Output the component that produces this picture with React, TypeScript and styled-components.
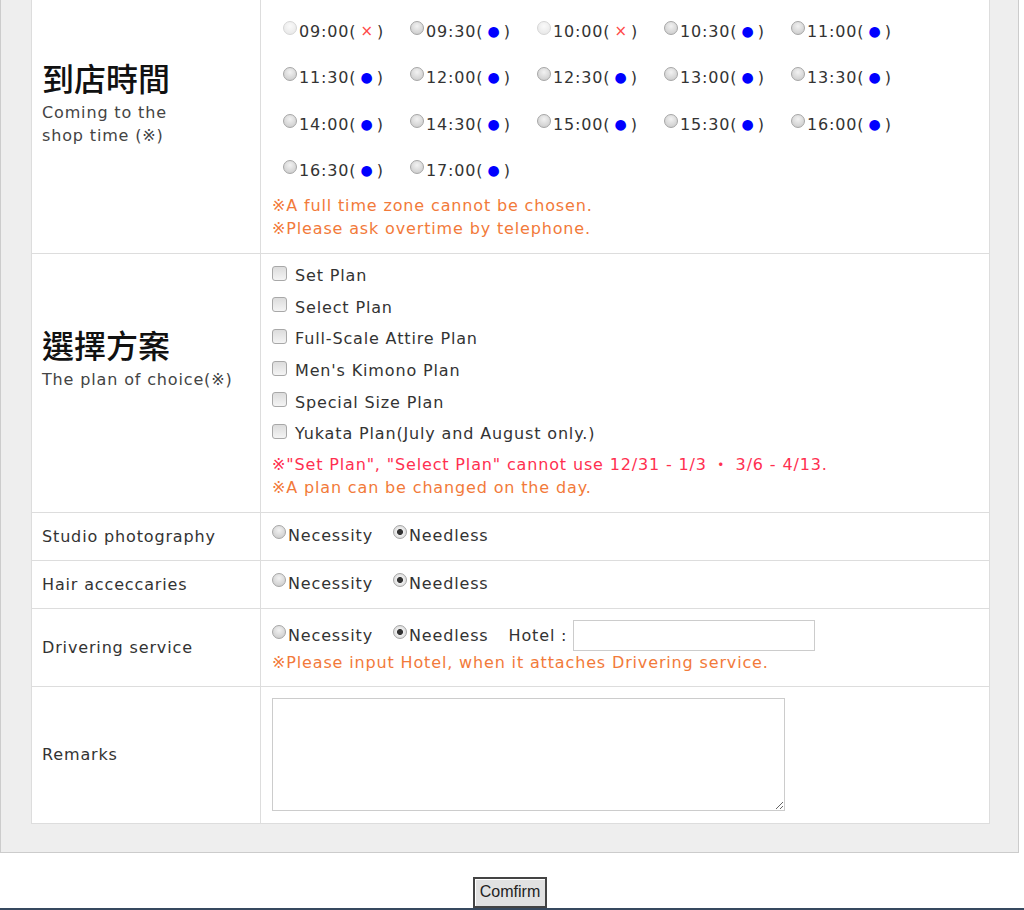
import styled, { createGlobalStyle } from "styled-components";

const GlobalStyle = createGlobalStyle`
  html, body {
    margin: 0;
    padding: 0;
    background: #fff;
  }
  body {
    font-family: "DejaVu Sans", "Noto Sans CJK TC", sans-serif;
    font-size: 16px;
    letter-spacing: 0.85px;
    color: #333;
  }
`;

const Page = styled.div`
  width: 1024px;
  height: 910px;
  display: flex;
  flex-direction: column;
  overflow: hidden;
`;

const Panel = styled.div`
  width: 1019px;
  box-sizing: border-box;
  background: #eee;
  border: 1px solid #ccc;
  border-top: none;
  padding: 0 28px 28px 30px;
`;

const Table = styled.div`
  background: #fff;
  border-left: 1px solid #ddd;
  border-right: 1px solid #ddd;
`;

const Row = styled.div`
  display: grid;
  grid-template-columns: 229px 1fr;
  border-bottom: 1px solid #ddd;
`;

const LabelCell = styled.div<{ $heading?: boolean }>`
  box-sizing: border-box;
  border-right: 1px solid #ddd;
  padding: 0 10px ${(p) => (p.$heading ? "50px" : "0")};
  display: flex;
  flex-direction: column;
  justify-content: center;
  line-height: 23px;
`;

const Heading = styled.div`
  font-family: "Noto Sans CJK TC", sans-serif;
  font-size: 32px;
  font-weight: 500;
  line-height: 40px;
  letter-spacing: 0;
  color: #111;
  margin-bottom: 4px;
`;

const Sub = styled.div`
  color: #444;
  line-height: 23px;
`;

const ValueCell = styled.div<{ $pad?: string }>`
  padding: ${(p) => p.$pad ?? "11px 11px 13px"};
  line-height: 23px;
`;

const TimeGrid = styled.div`
  display: grid;
  grid-template-columns: repeat(5, 127px);
  grid-auto-rows: 46.5px;
  align-items: center;
  padding-left: 11px;
`;

const Choice = styled.label`
  display: inline-flex;
  align-items: center;
  white-space: nowrap;
`;

const Radio = styled.input.attrs({ type: "radio" })`
  appearance: none;
  width: 14px;
  height: 14px;
  margin: 0 2px 7px 0;
  flex: none;
  box-sizing: border-box;
  border-radius: 50%;
  border: 1px solid #a6a6a6;
  background: radial-gradient(circle at 50% 35%, #f2f2f2, #c6c6c6);
  &:checked {
    background: radial-gradient(circle, #333 0 2.6px, #eeeeee 3.4px, #cfcfcf 100%);
  }
  &:disabled {
    border-color: #d6d6d6;
    background: radial-gradient(circle at 50% 35%, #fafafa, #e4e4e4);
  }
`;

const Mark = styled.span<{ $full?: boolean }>`
  display: inline-block;
  margin: 0 4px;
  font-size: ${(p) => (p.$full ? "15px" : "14px")};
  color: ${(p) => (p.$full ? "#ff4a4a" : "#0000ff")};
  letter-spacing: 0;
`;

const Note = styled.div<{ $alert?: boolean }>`
  color: ${(p) => (p.$alert ? "#ff3050" : "#f27a3a")};
  line-height: 23px;
`;

const PlanList = styled.div`
  display: flex;
  flex-direction: column;
  margin-bottom: 3px;
`;

const PlanItem = styled.label`
  display: flex;
  align-items: center;
  height: 31.6px;
`;

const Check = styled.input.attrs({ type: "checkbox" })`
  appearance: none;
  width: 15px;
  height: 15px;
  margin: 0 8px 5px 0;
  flex: none;
  box-sizing: border-box;
  border: 1px solid #a8a8a8;
  border-radius: 3px;
  background: linear-gradient(#dcdcdc, #f4f4f4);
`;

const OptionLine = styled.div`
  display: flex;
  align-items: center;
  gap: 20px;
  min-height: 23px;
`;

const HotelInput = styled.input`
  width: 242px;
  height: 31px;
  box-sizing: border-box;
  border: 1px solid #ccc;
  margin-left: -14px;
  padding: 0 4px;
`;

const Remarks = styled.textarea`
  display: block;
  width: 513px;
  height: 113px;
  box-sizing: border-box;
  border: 1px solid #ccc;
  resize: both;
`;

const ButtonBar = styled.div`
  height: 55px;
  box-sizing: border-box;
  padding-top: 24px;
  display: flex;
  justify-content: center;
`;

const Confirm = styled.button`
  width: 74px;
  height: 31px;
  font-family: "Liberation Sans", Arial, sans-serif;
  font-size: 16px;
  letter-spacing: 0;
  color: #222;
  background: #e1e1e1;
  border: 2px solid #444;
  box-shadow: inset 1px 1px 0 #fff;
  padding: 0;
  margin-left: -4px;
`;

const Taskbar = styled.div`
  height: 2px;
  background: #36495f;
`;

type Slot = { time: string; full?: boolean };

const slots: Slot[] = [
  { time: "09:00", full: true },
  { time: "09:30" },
  { time: "10:00", full: true },
  { time: "10:30" },
  { time: "11:00" },
  { time: "11:30" },
  { time: "12:00" },
  { time: "12:30" },
  { time: "13:00" },
  { time: "13:30" },
  { time: "14:00" },
  { time: "14:30" },
  { time: "15:00" },
  { time: "15:30" },
  { time: "16:00" },
  { time: "16:30" },
  { time: "17:00" },
];

const plans = [
  "Set Plan",
  "Select Plan",
  "Full-Scale Attire Plan",
  "Men's Kimono Plan",
  "Special Size Plan",
  "Yukata Plan(July and August only.)",
];

function NeedChoice({ name }: { name: string }) {
  return (
    <>
      <Choice>
        <Radio name={name} />
        Necessity
      </Choice>
      <Choice>
        <Radio name={name} defaultChecked />
        Needless
      </Choice>
    </>
  );
}

export default function App() {
  return (
    <Page>
      <GlobalStyle />
      <Panel>
        <Table>
          <Row>
            <LabelCell $heading>
              <Heading>到店時間</Heading>
              <Sub>Coming to the</Sub>
              <Sub>shop time (※)</Sub>
            </LabelCell>
            <ValueCell $pad="8px 11px 13px">
              <TimeGrid>
                {slots.map((s) => (
                  <Choice key={s.time}>
                    <Radio name="time" disabled={s.full} />
                    {s.time}(<Mark $full={s.full}>{s.full ? "×" : "●"}</Mark>)
                  </Choice>
                ))}
              </TimeGrid>
              <Note>※A full time zone cannot be chosen.</Note>
              <Note>※Please ask overtime by telephone.</Note>
            </ValueCell>
          </Row>

          <Row>
            <LabelCell $heading>
              <Heading>選擇方案</Heading>
              <Sub>The plan of choice(※)</Sub>
            </LabelCell>
            <ValueCell $pad="6px 11px 13px">
              <PlanList>
                {plans.map((p) => (
                  <PlanItem key={p}>
                    <Check />
                    {p}
                  </PlanItem>
                ))}
              </PlanList>
              <Note $alert>
                ※"Set Plan", "Select Plan" cannot use 12/31 - 1/3 ・ 3/6 - 4/13.
              </Note>
              <Note>※A plan can be changed on the day.</Note>
            </ValueCell>
          </Row>

          <Row>
            <LabelCell>Studio photography</LabelCell>
            <ValueCell>
              <OptionLine>
                <NeedChoice name="studio" />
              </OptionLine>
            </ValueCell>
          </Row>

          <Row>
            <LabelCell>Hair acceccaries</LabelCell>
            <ValueCell>
              <OptionLine>
                <NeedChoice name="hair" />
              </OptionLine>
            </ValueCell>
          </Row>

          <Row>
            <LabelCell>Drivering service</LabelCell>
            <ValueCell $pad="11px 11px 12px">
              <OptionLine>
                <NeedChoice name="drive" />
                <span>Hotel :</span>
                <HotelInput type="text" />
              </OptionLine>
              <Note>※Please input Hotel, when it attaches Drivering service.</Note>
            </ValueCell>
          </Row>

          <Row>
            <LabelCell>Remarks</LabelCell>
            <ValueCell $pad="11px 11px 12px">
              <Remarks />
            </ValueCell>
          </Row>
        </Table>
      </Panel>
      <ButtonBar>
        <Confirm type="button">Comfirm</Confirm>
      </ButtonBar>
      <Taskbar />
    </Page>
  );
}
